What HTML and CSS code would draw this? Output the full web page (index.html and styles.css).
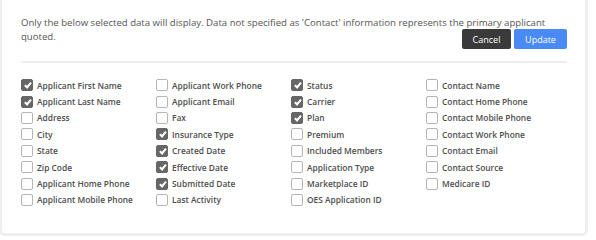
FILE: index.html
```html
<!DOCTYPE html>
<html lang="en">
<head>
    <meta charset="UTF-8">
    <meta name="viewport" content="width=device-width, initial-scale=1.0">
    <title>Display Fields</title>
    <link rel="stylesheet" href="styles.css">
</head>
<body>
    <div class="panel">
        <div class="note"><span>Only the below selected data will display. Data not specified as 'Contact' information represents the primary applicant quoted.</span></div>
        <div class="actions">
            <button class="btn btn-cancel">Cancel</button>
            <button class="btn btn-update">Update</button>
        </div>
        <hr>

        <div class="fields">
            <!-- columna 1 -->
            <label class="field"><span class="box checked"></span>Applicant First Name</label>
            <label class="field"><span class="box checked"></span>Applicant Last Name</label>
            <label class="field"><span class="box"></span>Address</label>
            <label class="field"><span class="box"></span>City</label>
            <label class="field"><span class="box"></span>State</label>
            <label class="field"><span class="box"></span>Zip Code</label>
            <label class="field"><span class="box"></span>Applicant Home Phone</label>
            <label class="field"><span class="box"></span>Applicant Mobile Phone</label>

            <!-- columna 2 -->
            <label class="field"><span class="box"></span>Applicant Work Phone</label>
            <label class="field"><span class="box"></span>Applicant Email</label>
            <label class="field"><span class="box"></span>Fax</label>
            <label class="field"><span class="box checked"></span>Insurance Type</label>
            <label class="field"><span class="box checked"></span>Created Date</label>
            <label class="field"><span class="box checked"></span>Effective Date</label>
            <label class="field"><span class="box checked"></span>Submitted Date</label>
            <label class="field"><span class="box"></span>Last Activity</label>

            <!-- columna 3 -->
            <label class="field"><span class="box checked"></span>Status</label>
            <label class="field"><span class="box checked"></span>Carrier</label>
            <label class="field"><span class="box checked"></span>Plan</label>
            <label class="field"><span class="box"></span>Premium</label>
            <label class="field"><span class="box"></span>Included Members</label>
            <label class="field"><span class="box"></span>Application Type</label>
            <label class="field"><span class="box"></span>Marketplace ID</label>
            <label class="field"><span class="box"></span>OES Application ID</label>

            <!-- columna 4 -->
            <label class="field"><span class="box"></span>Contact Name</label>
            <label class="field"><span class="box"></span>Contact Home Phone</label>
            <label class="field"><span class="box"></span>Contact Mobile Phone</label>
            <label class="field"><span class="box"></span>Contact Work Phone</label>
            <label class="field"><span class="box"></span>Contact Email</label>
            <label class="field"><span class="box"></span>Contact Source</label>
            <label class="field"><span class="box"></span>Medicare ID</label>
        </div>
    </div>
</body>
</html>
```

FILE: styles.css
```css
html{
    box-sizing: border-box;
    font-family: 'Open Sans', sans-serif;
    font-size: 16px;
}

*,
*:after,
*:before{
    box-sizing: inherit;
}

body{
    margin: 0;
    background-color: #fff;
    color: #555;
}

.panel{
    margin: -10px 8px 0 -1px;
    padding: 26px 18px 25px 19px;
    border: 3px solid #eeeeee;
    border-top: none;
    border-radius: 0 0 6px 6px;
    background-color: #fff;
}

.note{
    font-size: 9.6px;
    line-height: 14px;
}

.actions{
    display: flex;
    justify-content: flex-end;
    gap: 3px;
    margin-top: -15px;
}

.btn{
    height: 20px;
    padding: 0;
    border: none;
    border-radius: 2px;
    font-family: inherit;
    font-size: 9px;
    color: #fff;
}

.btn-cancel{
    width: 49px;
    background-color: #3a3a3a;
}

.btn-update{
    width: 53px;
    background-color: #4a8af4;
}

hr{
    margin: 12px 0 0;
    border: none;
    border-top: 2px solid #eeeeee;
}

.fields{
    display: grid;
    grid-template-columns: repeat(4, 135px);
    grid-template-rows: repeat(8, 16.4px);
    grid-auto-flow: column;
    margin-top: 14px;
}

.field{
    display: flex;
    align-items: center;
    gap: 4px;
    font-size: 8.4px;
    font-weight: 600;
    color: #4d4d4d;
    white-space: nowrap;
}

.box{
    position: relative;
    flex: none;
    width: 12px;
    height: 12px;
    border: 1px solid #b5b5b5;
    border-radius: 2px;
    background-color: #fff;
}

.box.checked{
    border-color: #666;
    background-color: #666;
}

/* la palomita del checkbox */
.box.checked:after{
    content: "";
    position: absolute;
    left: 3.5px;
    top: 1px;
    width: 3.5px;
    height: 7px;
    border: solid #fff;
    border-width: 0 2px 2px 0;
    transform: rotate(40deg);
}
```
